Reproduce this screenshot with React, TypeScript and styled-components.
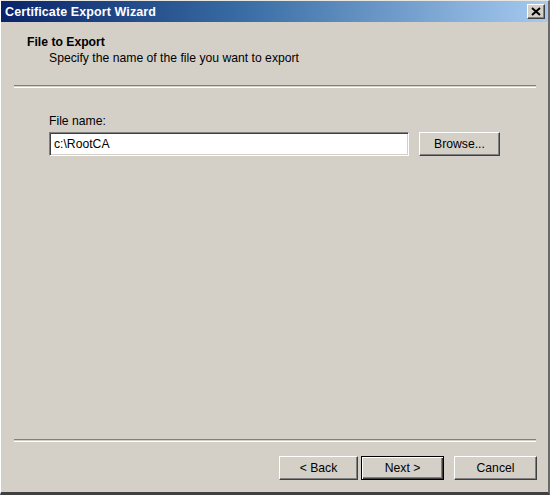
import React from "react";
import styled, { createGlobalStyle } from "styled-components";

const Global = createGlobalStyle`
  html, body { margin: 0; padding: 0; background: #d4d0c8; }
  body { font-family: "Liberation Sans", Arial, sans-serif; }
`;

const Window = styled.div`
  box-sizing: border-box;
  width: 550px;
  height: 495px;
  display: flex;
  flex-direction: column;
  background: #d4d0c8;
  border-top: 1px solid #e8e6e0;
  border-left: 1px solid #ffffff;
  border-right: 2px solid #6a6a6a;
  border-bottom: 3px solid #404040;
  font-family: "Liberation Sans", Arial, sans-serif;
  font-size: 12.2px;
  color: #000;
`;

const TitleBar = styled.div`
  height: 21px;
  display: flex;
  align-items: center;
  justify-content: space-between;
  padding: 0 3px 0 4px;
  background: linear-gradient(to right, #0a246a 0%, #3a6ea5 45%, #a6caf0 100%);
`;

const TitleText = styled.span`
  color: #fff;
  font-weight: bold;
  font-size: 12.5px;
  letter-spacing: 0.1px;
`;

const CloseButton = styled.div`
  box-sizing: border-box;
  width: 18px;
  height: 15px;
  display: flex;
  align-items: center;
  justify-content: center;
  background: #d4d0c8;
  border-top: 1px solid #fff;
  border-left: 1px solid #fff;
  border-right: 1px solid #404040;
  border-bottom: 1px solid #404040;
  box-shadow: inset -1px -1px 0 #808080;
`;

const Header = styled.div`
  padding: 13px 0 0 26px;
  height: 63px;
  box-sizing: border-box;
`;

const HeaderTitle = styled.div`
  font-weight: bold;
  line-height: 14px;
`;

const HeaderSub = styled.div`
  padding-left: 22px;
  margin-top: 2px;
  line-height: 14px;
`;

const Separator = styled.div`
  margin: 0 12px 0 13px;
  height: 1px;
  border-top: 1px solid #808080;
  border-bottom: 1px solid #ffffff;
`;

const Content = styled.div`
  flex: 1;
  padding: 26px 0 0 48px;
`;

const Label = styled.div`
  line-height: 14px;
  margin-bottom: 4px;
`;

const Row = styled.div`
  display: flex;
  align-items: center;
  gap: 10px;
`;

const TextBox = styled.div`
  box-sizing: border-box;
  width: 360px;
  height: 24px;
  display: flex;
  align-items: center;
  padding-left: 4px;
  background: #fff;
  border-top: 1px solid #808080;
  border-left: 1px solid #808080;
  border-right: 1px solid #ffffff;
  border-bottom: 1px solid #ffffff;
  box-shadow: inset 1px 1px 0 #404040, inset -1px -1px 0 #d4d0c8;
`;

const Button = styled.div<{ $w: number; $default?: boolean }>`
  box-sizing: border-box;
  width: ${(p) => p.$w}px;
  height: 24px;
  display: flex;
  align-items: center;
  justify-content: center;
  background: #d4d0c8;
  border-top: 1px solid ${(p) => (p.$default ? "#000" : "#fff")};
  border-left: 1px solid ${(p) => (p.$default ? "#000" : "#fff")};
  border-right: 1px solid ${(p) => (p.$default ? "#000" : "#404040")};
  border-bottom: 1px solid ${(p) => (p.$default ? "#000" : "#404040")};
  box-shadow: ${(p) =>
    p.$default
      ? "inset 1px 1px 0 #fff, inset -1px -1px 0 #404040, inset -2px -2px 0 #808080"
      : "inset -1px -1px 0 #808080"};
`;

const Footer = styled.div`
  display: flex;
  flex-direction: column;
`;

const ButtonRow = styled.div`
  display: flex;
  justify-content: flex-end;
  padding: 14px 11px 12px 0;
`;

const Gap = styled.div<{ $w: number }>`
  width: ${(p) => p.$w}px;
`;

export default function App() {
  return (
    <>
      <Global />
      <Window>
        <TitleBar>
          <TitleText>Certificate Export Wizard</TitleText>
          <CloseButton>
            <svg width="10" height="9" viewBox="0 0 10 9">
              <path d="M1 1 L9 8 M9 1 L1 8" stroke="#000" strokeWidth="2" />
            </svg>
          </CloseButton>
        </TitleBar>
        <Header>
          <HeaderTitle>File to Export</HeaderTitle>
          <HeaderSub>Specify the name of the file you want to export</HeaderSub>
        </Header>
        <Separator />
        <Content>
          <Label>File name:</Label>
          <Row>
            <TextBox>c:\RootCA</TextBox>
            <Button $w={81}>Browse...</Button>
          </Row>
        </Content>
        <Footer>
          <Separator />
          <ButtonRow>
            <Button $w={79}>&lt; Back</Button>
            <Gap $w={3} />
            <Button $w={83} $default>Next &gt;</Button>
            <Gap $w={10} />
            <Button $w={83}>Cancel</Button>
          </ButtonRow>
        </Footer>
      </Window>
    </>
  );
}
